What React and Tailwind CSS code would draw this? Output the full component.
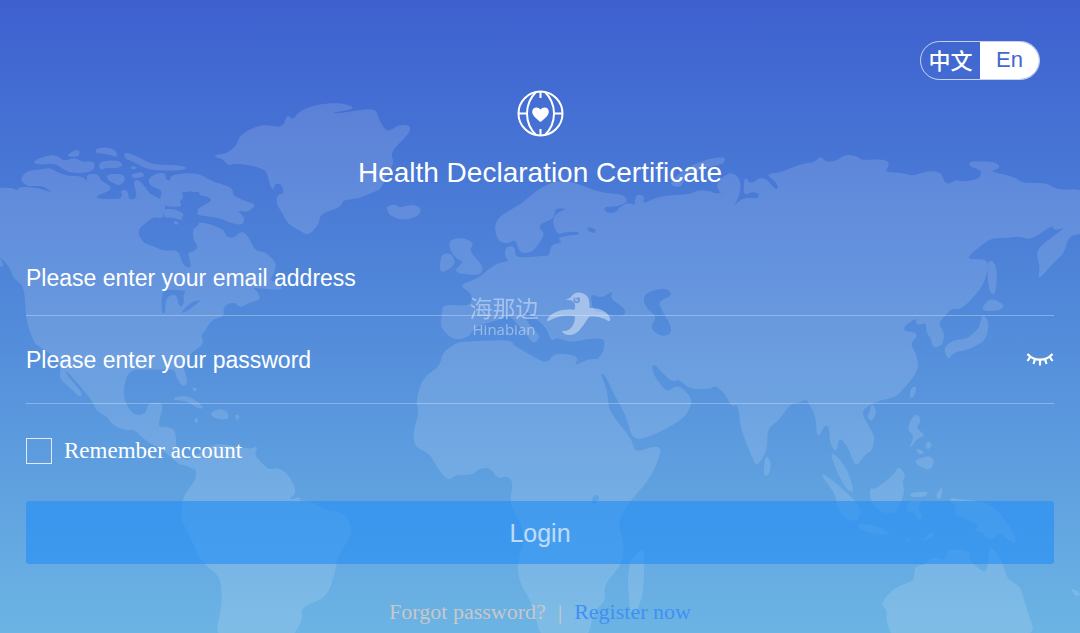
import { useState } from "react";

// Rounds the corners of closed polygons written as "Mx y Lx y x y ...Z".
function soften(d) {
  return d
    .split("Z")
    .filter((part) => part.trim())
    .map((part) => {
      const n = part.match(/-?\d+(\.\d+)?/g).map(Number);
      const pts = [];
      for (let i = 0; i + 1 < n.length; i += 2) pts.push([n[i], n[i + 1]]);
      const mix = (a, b, t) => `${a[0] + (b[0] - a[0]) * t} ${a[1] + (b[1] - a[1]) * t}`;
      return (
        pts
          .map((p, i) => {
            const prev = pts[(i + pts.length - 1) % pts.length];
            const next = pts[(i + 1) % pts.length];
            return `${i ? "L" : "M"}${mix(p, prev, 0.42)}Q${p[0]} ${p[1]} ${mix(p, next, 0.42)}`;
          })
          .join("") + "Z"
      );
    })
    .join("");
}

const NORTH_AMERICA =
  "M-20 325L40 325 50 335 60 322 110 325 165 342 135 318 110 315 85 318 62 300 80 275 120 270 150 265 165 275 200 290 245 290 262 308 262 283 295 285 298 300 330 320 330 330 290 345 287 358 360 360 370 345 362 335 380 330 385 360 408 360 412 340 402 310 410 300 425 310 450 345 470 352 490 370 495 385 485 400 490 412 460 410 445 420 415 445 413 465 430 492 460 500 490 515 530 512 540 530 545 550 560 565 575 563 572 540 565 520 585 515 597 500 580 475 582 440 600 428 630 435 670 450 675 470 700 478 727 453 745 475 765 515 795 518 828 550 820 580 805 600 850 625 830 628 750 620 770 635 780 658 750 665 720 682 708 665 680 670 668 685 670 708 640 715 622 735 615 750 600 765 610 790 575 815 555 840 545 855 558 890 560 910 548 918 530 890 525 865 450 868 400 865 375 890 368 950 385 990 410 1010 440 1000 445 970 485 970 485 990 475 1020 475 1042 500 1042 525 1050 527 1110 545 1135 570 1145 590 1170 560 1155 540 1152 520 1135 480 1100 450 1090 400 1045 380 1050 340 1035 325 1010 290 990 280 965 245 920 195 865 195 880 215 905 245 940 240 950 210 920 180 895 185 860 160 825 115 795 105 790 80 720 75 620 40 590 35 570 10 535 -20 520Z";

const ARCTIC_ISLANDS =
  "M100 248L120 235 155 226 175 232 190 245 225 235 245 248 283 245 280 270 245 278 205 275 165 248 125 252ZM198 228L235 208 237 228ZM288 208L320 203 345 212 352 230 320 220 290 218ZM300 245L355 243 367 255 350 264 320 260 300 270ZM322 285L365 283 375 298 360 315 340 308 325 298ZM372 218L410 230 455 256 540 258 560 265 530 270 445 268 400 243 378 235ZM392 260L410 262 400 268ZM395 285L425 277 432 288 400 294ZM448 295L475 280 495 282 495 300 512 305 515 285 590 280 640 308 695 323 698 348 735 365 768 375 740 395 705 388 732 412 728 432 700 430 655 410 600 405 585 398 600 385 640 362 620 345 600 345 600 333 540 333 550 350 535 365 545 378 500 378 480 360 490 330 450 315ZM490 388L530 390 558 410 550 420 515 410 495 412ZM522 425L535 428 528 434ZM553 435L565 438 558 444ZM-10 520L12 560 -10 555Z";

const GREENLAND =
  "M640 228L680 222 710 200 720 170 750 150 790 135 850 145 862 105 878 122 900 95 950 75 1020 70 1068 84 990 97 1010 103 1125 85 1135 120 1160 160 1200 135 1230 138 1225 160 1170 215 1180 250 1160 280 1142 325 1120 335 1070 355 1030 357 1020 380 960 400 955 430 935 455 920 462 900 450 865 430 850 400 830 370 835 345 855 340 845 310 825 308 818 330 808 300 800 270 760 255 705 248 685 255 670 235Z";

const SOUTH_AMERICA =
  "M590 380L590 420 550 470 545 540 570 580 600 660 665 710 668 800 645 900 870 900 905 840 902 800 980 770 1005 690 1010 650 1050 590 1052 555 1030 520 970 510 930 485 860 480 890 455 860 400 830 385 805 392 760 345 772 320 750 330 650 310 600 340 560 365 545 370ZM515 178L550 168 580 178 612 205 590 202 560 180ZM630 222L655 208 680 215 685 235 655 237ZM583 236L593 238 590 250ZM706 225L717 228 712 240ZM578 144L590 147 583 153ZM875 480L900 472 895 485Z";

const EUROPE_AFRICA =
  "M310 675L395 680 398 640 360 615 410 600 440 575 475 550 510 545 495 525 500 502 522 500 525 530 545 535 600 530 630 530 635 495 670 490 655 475 690 468 722 465 715 452 670 455 655 462 640 430 645 405 685 385 645 382 640 415 600 430 595 445 612 460 595 490 575 515 540 518 528 475 500 490 475 480 465 440 480 410 550 370 600 325 650 305 700 308 780 340 850 345 862 365 830 378 790 378 795 400 830 400 840 380 870 370 885 380 890 345 912 348 905 375 960 350 1050 345 1080 330 1140 342 1140 925 1125 915 1110 925 1050 925 1015 895 1000 905 965 875 945 850 932 860 945 895 980 940 1015 915 1058 960 1035 1010 960 1055 880 1083 860 1005 825 945 795 880 778 880 800 930 805 995 875 1080 882 1120 965 1095 950 1150 920 1205 870 1260 830 1325 850 1390 845 1450 790 1515 795 1560 760 1595 740 1680 605 1680 580 1575 538 1500 535 1440 555 1390 550 1340 510 1270 522 1205 500 1185 475 1195 450 1160 415 1165 395 1183 345 1183 325 1200 295 1165 270 1120 225 1098 222 1055 238 1000 230 960 250 895 300 860 310 820 350 788 420 785 480 782 515 785 520 798 560 820 620 855 645 820 715 830 700 860 750 838 775 840 795 810 795 772 740 775 690 785 650 770 635 782 622 745 590 715 560 690 545 700 570 740 600 770 580 790 560 760 520 715 500 705 470 720 430 730 400 745 385 768 350 778 325 765 303 740 308 700Z";

const ATLANTIC_ISLANDS =
  "M140 380L165 375 180 385 215 375 242 385 235 405 190 420 150 405ZM330 482L365 475 400 488 385 512 428 560 420 585 340 577 375 545 350 535 330 505ZM305 525L330 520 345 545 330 565 300 577ZM1010 290L1050 260 1100 240 1155 232 1150 250 1090 262 1030 290 1025 320 990 315ZM870 1450L885 1430 900 1410 912 1420 908 1540 890 1590 872 1600 865 1500Z";

const ASIA =
  "M36 186L72 198 50 170 65 145 95 128 120 150 118 195 95 235 130 205 175 208 180 190 155 183 132 195 135 140 150 165 190 140 225 180 237 178 230 155 200 133 240 130 300 105 345 98 363 80 375 98 410 95 437 75 475 82 480 92 555 90 567 102 552 128 600 130 640 140 680 125 722 128 730 155 745 165 768 152 790 157 840 148 848 120 810 108 810 95 885 98 900 112 865 125 940 142 970 162 1040 160 1070 182 1160 178 1160 308 1105 315 1090 370 1060 395 1015 448 1022 415 1012 375 1020 350 1105 288 1062 300 1060 282 990 328 960 317 920 322 870 322 800 380 810 390 860 390 862 420 845 470 785 537 755 533 735 555 720 570 715 585 732 610 725 645 700 652 695 625 680 605 680 575 650 585 650 560 610 588 612 605 655 612 628 640 650 680 653 720 615 770 585 800 525 812 478 845 515 905 522 925 515 960 490 975 468 1010 450 960 430 930 415 925 408 965 392 940 388 885 372 885 352 925 350 860 328 820 320 805 300 815 270 820 235 870 200 895 200 960 170 1008 160 985 125 900 115 820 95 828 80 795 45 762 34 770Z";

const JAPAN =
  "M862 395L882 395 890 440 883 495 868 480ZM870 505L912 525 900 540 842 542ZM848 550L866 580 855 630 810 655 760 665 745 688 732 655 760 632 800 630 840 595Z";

const OCEANIA =
  "M635 85L648 80 640 110 630 112ZM515 130L528 155 515 182 503 170 512 155ZM198 285L212 310 205 345 192 345ZM392 280L410 290 440 330 462 398 440 385 415 340ZM360 338L400 365 440 400 480 440 475 485 430 470 412 440 410 405ZM475 490L530 500 570 520 540 522 480 508ZM510 385L525 390 585 345 595 320 615 345 605 365 612 395 590 458 550 458 515 430ZM640 170L655 165 660 185 645 205 675 225 650 235 628 265 645 230 623 205ZM650 265L672 278 655 282ZM685 245L695 255 685 267 677 258ZM648 300L690 288 702 305 688 330 650 312ZM632 400L683 395 675 408 635 410ZM625 425L668 425 650 440 668 475 655 478 640 450 620 460ZM725 382L725 400 715 420 710 405ZM748 415L770 418 830 425 870 435 915 480 952 550 925 540 900 512 870 542 850 515 825 515 838 495 800 475 765 462 770 440ZM620 540L632 538 626 545ZM668 545L695 517 700 525ZM870 555L905 605 920 660 960 680 975 740 1010 840 582 840 560 780 563 750 543 730 590 680 645 665 645 620 680 615 700 592 735 605 745 568 810 575 805 605 855 642 865 620ZM1112 685L1140 700 1130 708Z";

const INLAND_WATERS =
  "M485 880L500 868 560 872 550 885 552 915 538 922 530 885 510 885 497 900 495 942 485 940ZM540 940L575 905 605 900 590 912 560 935ZM1770 880L1805 895 1840 870 1830 895 1875 925 1875 945 1840 950 1810 935 1780 935ZM1935 880L1995 862 2020 885 1975 905 1985 930 2015 980 2010 1005 1980 1008 1950 985 1970 950 1945 930 1930 905ZM1760 680L1788 688 1785 700 1765 695ZM1775 1490L1795 1483 1798 1500 1780 1520ZM560 585L570 570 580 585 600 580 590 650 600 670 580 690 555 690 540 670 555 630Z";

function WorldMap() {
  return (
    <svg
      className="pointer-events-none absolute inset-0 h-full w-full"
      viewBox="0 0 3240 1899"
      preserveAspectRatio="xMidYMid slice"
      aria-hidden="true"
    >
      <defs>
        <mask id="land" maskUnits="userSpaceOnUse" x="0" y="0" width="3240" height="1899">
          <g fill="#fff" stroke="#fff" strokeWidth="4" strokeLinejoin="round">
            <g transform="translate(0 240)">
              <path d={soften(NORTH_AMERICA)} />
              <path d={soften(ARCTIC_ISLANDS)} />
              <path d={soften(GREENLAND)} />
            </g>
            <path transform="translate(0 1020)" d={soften(SOUTH_AMERICA)} />
            <g transform="translate(1020 240)">
              <path d={soften(EUROPE_AFRICA)} />
              <path d={soften(ATLANTIC_ISLANDS)} />
            </g>
            <g transform="translate(2100 390)">
              <path d={soften(ASIA)} />
              <path d={soften(JAPAN)} />
              <path d="M20 192H80V760H20Z" />
            </g>
            <path transform="translate(2100 1080)" d={soften(OCEANIA)} />
          </g>
          <path fill="#000" d={soften(INLAND_WATERS)} />
        </mask>
      </defs>
      <rect width="3240" height="1899" fill="#fff" fillOpacity=".13" mask="url(#land)" />
    </svg>
  );
}

function GlobeHeart() {
  return (
    <svg className="h-[47px] w-[47px]" viewBox="0 0 47 47" fill="none" stroke="#fff" strokeWidth="2" aria-hidden="true">
      <circle cx="23.5" cy="23.5" r="22" />
      <path d="M19 2C7 14 7 33 19 45M28 2C40 14 40 33 28 45M1.500 23.500H10.500M36.500 23.500H45.500M23.500 1.500V8M23.500 39V45.500" />
      <path d="M23.500 32C20 29 15.200 25.500 15.200 21.700C15.200 17 21 16 23.500 19.500C26 16 31.800 17 31.800 21.700C31.800 25.500 27 29 23.500 32Z" fill="#fff" stroke="none" />
    </svg>
  );
}

function ClosedEye() {
  return (
    <svg className="h-[14px] w-[28px]" viewBox="0 0 28 14" fill="none" stroke="#fff" strokeWidth="2.2" aria-hidden="true">
      <path d="M1.500 1C8 8.500 20 8.500 26.500 1M4.500 3.500L1.500 8M9 6L7.500 11M14 6.800V12.500M19 6L20.500 11M23.500 3.500L26.500 8" />
    </svg>
  );
}

function Watermark() {
  return (
    <div className="pointer-events-none absolute top-[290px] left-1/2 flex -translate-x-1/2 items-start gap-[8px] text-white opacity-40">
      <div className="flex flex-col items-center pt-[6px]">
        <span className="font-['Noto_Sans_CJK_SC',sans-serif] text-[23px] leading-[23px]">海那边</span>
        <span className="font-['Open_Sans',sans-serif] text-[15px] leading-[20px]">Hinabian</span>
      </div>
      <svg className="h-[46px] w-[64px]" viewBox="276 15 192 138" aria-hidden="true">
        <path
          fill="#fff"
          fillRule="evenodd"
          d="M332 43C340 42 347 40 350 35C358 20 380 18 394 30C404 39 406 54 405 69C430 67 462 78 468 103C468 108 464 109 460 107C445 97 425 92 404 95C396 105 390 117 380 129C368 145 355 151 342 150C332 149 324 144 322 137C334 140 346 135 354 123C360 113 362 103 361 94C335 88 305 95 282 108C278 109 277 106 279 102C286 86 320 69 359 75C364 66 363 56 356 49C350 45 340 45 332 43ZM360 36C354 42 357 54 367 55C377 55 380 42 372 37L360 41L371 44C371 50 364 50 362 46Z"
        />
      </svg>
    </div>
  );
}

export default function App() {
  const [lang, setLang] = useState("en");
  const [visible, setVisible] = useState(false);
  const chosen = "bg-white text-[#4267d0]";
  const plain = "text-white";
  const field =
    "min-w-0 flex-1 bg-transparent text-[23px] leading-[28px] text-white outline-none placeholder:text-white placeholder:opacity-100";

  return (
    <main className="relative min-h-screen overflow-hidden bg-linear-to-b from-[#3e60cf] via-[#528ada] to-[#6cb4e4] font-['Liberation_Sans',Arial,sans-serif] text-white">
      <WorldMap />
      <div className="relative">
        <header className="flex flex-col items-center pt-[41px]">
          <div className="mr-[40px] flex h-[39px] w-[120px] self-end overflow-hidden rounded-full border border-white/70">
            <button
              type="button"
              onClick={() => setLang("zh")}
              className={`flex flex-1 items-start justify-center font-['Noto_Sans_CJK_SC',sans-serif] text-[22px] leading-[34px] font-medium ${lang === "zh" ? chosen : plain}`}
            >
              中文
            </button>
            <button
              type="button"
              onClick={() => setLang("en")}
              className={`flex flex-1 items-start justify-center text-[22px] leading-[36px] ${lang === "en" ? chosen : plain}`}
            >
              En
            </button>
          </div>
          <div className="mt-[10px]">
            <GlobeHeart />
          </div>
          <h1 className="mt-[18px] text-[28px] leading-[36px]">Health Declaration Certificate</h1>
        </header>

        <form className="mt-[50px] px-[26px]" onSubmit={(e) => e.preventDefault()}>
          <div className="flex h-[75px] items-center border-b border-white/30">
            <input type="email" aria-label="Email address" placeholder="Please enter your email address" className={field} />
          </div>
          <div className="flex h-[88px] items-center border-b border-white/30">
            <input
              type={visible ? "text" : "password"}
              aria-label="Password"
              placeholder="Please enter your password"
              className={field}
            />
            <button type="button" aria-label="Show password" onClick={() => setVisible(!visible)}>
              <ClosedEye />
            </button>
          </div>
          <label className="mt-[33px] flex h-[27px] items-center gap-[12px] font-['Liberation_Serif',serif] text-[23px] leading-[27px]">
            <input type="checkbox" className="h-[26px] w-[26px] appearance-none border border-white/80 checked:bg-white/60" />
            Remember account
          </label>
          <button
            type="submit"
            className="mt-[37px] h-[63px] w-full rounded-[3px] bg-[#228df5]/60 text-[25px] leading-[30px] text-white/65"
          >
            Login
          </button>
        </form>

        <nav className="mt-[34px] flex justify-center gap-[12px] font-['Liberation_Serif',serif] text-[22px] leading-[28px] text-[#c8c8c8]">
          <a href="#forgot">Forgot password?</a>
          <span>|</span>
          <a href="#register" className="text-[#4090f4]">Register now</a>
        </nav>
      </div>
      <Watermark />
    </main>
  );
}
